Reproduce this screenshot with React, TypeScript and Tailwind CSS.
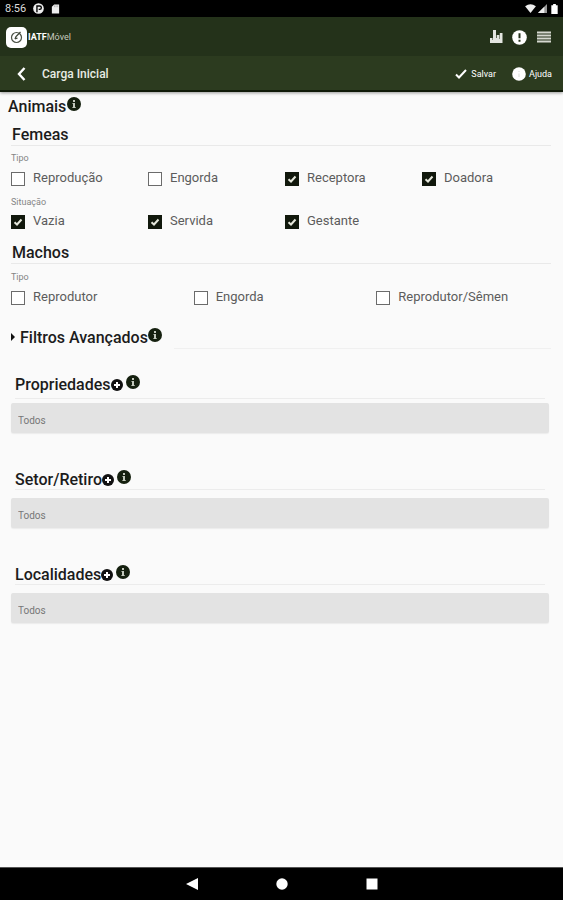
import type { ReactNode } from 'react';

function InfoIcon() {
  return (
    <svg viewBox="0 0 14 14" className="size-[14px] shrink-0" aria-hidden="true">
      <circle cx="7" cy="7" r="7" fill="#15200f" />
      <path d="M6 3h2v2H6zM5.5 6H8v4h.7v1H5.4v-1H6V7h-.5z" fill="#c3c9bd" />
    </svg>
  );
}

function PlusIcon() {
  return (
    <svg viewBox="0 0 12 12" className="size-3 shrink-0" aria-hidden="true">
      <circle cx="6" cy="6" r="6" fill="#111" />
      <path d="M6 3v6M3 6h6" stroke="#fff" strokeWidth="2" />
    </svg>
  );
}

function InfoButton({ label, className = '' }: { label: string; className?: string }) {
  return (
    <button type="button" aria-label={label} className={`mb-1 ${className}`}>
      <InfoIcon />
    </button>
  );
}

function Check({ label, checked = false }: { label: string; checked?: boolean }) {
  return (
    <label className="flex h-5 items-center gap-2 text-[13px] leading-4 text-[#5c5c5c]">
      <span className="relative mt-[2px] size-[14px] shrink-0">
        <input
          type="checkbox"
          defaultChecked={checked}
          className="peer block size-[14px] appearance-none border border-[#6b6b6b] bg-white checked:border-[#11180c] checked:bg-[#11180c]"
        />
        <svg
          viewBox="0 0 14 14"
          className="pointer-events-none absolute inset-0 hidden size-[14px] peer-checked:block"
          aria-hidden="true"
        >
          <path d="M3.5 7.2 6 9.5 10.5 4.5" fill="none" stroke="#e6e8dc" strokeWidth="2" />
        </svg>
      </span>
      <span>{label}</span>
    </label>
  );
}

function Caption({ children }: { children: ReactNode }) {
  return <h4 className="h-3 text-[9px] leading-[14px] text-[#858585]">{children}</h4>;
}

function GroupTitle({ children }: { children: ReactNode }) {
  return (
    <h3 className="mr-2 h-6 border-b border-[#e9e9e9] pl-px text-base leading-[26px] font-medium">
      {children}
    </h3>
  );
}

function Picker({ title, tall = false }: { title: string; tall?: boolean }) {
  return (
    <section className="h-[95px] pr-[10px]">
      <div
        className={`mr-1 ml-1 flex items-start border-b border-[#ececec] ${tall ? 'mb-1 h-[27px]' : 'mb-2 h-[23px]'}`}
      >
        <h3 className="text-base leading-[26px] font-medium">{title}</h3>
        <button type="button" aria-label={`Adicionar ${title}`} className="mt-[7px]">
          <PlusIcon />
        </button>
        <InfoButton label={`Sobre ${title}`} className="mt-[3px] ml-[3px]" />
      </div>
      <input
        type="text"
        aria-label={title}
        placeholder="Todos"
        className="block h-[30px] w-full rounded-xs bg-[#e3e3e3] px-[7px] pt-1 text-[10px] leading-4 shadow-[0_1px_1px_#ececec] outline-none placeholder:text-[#777]"
      />
    </section>
  );
}

function StatusBar() {
  return (
    <div className="flex h-[17px] items-center bg-black px-[5px] text-white">
      <span className="text-[11px] leading-4 text-[#ddd]">8:56</span>
      <svg viewBox="0 0 12 12" className="ml-[7px] size-[11px]" aria-hidden="true">
        <circle cx="6" cy="6" r="5.8" fill="#eee" />
        <path d="M4.3 10V3.3h3a1.8 1.8 0 0 1 0 3.6H6.2" fill="none" stroke="#000" strokeWidth="1.5" />
      </svg>
      <svg viewBox="0 0 9 11" className="ml-[7px] h-[10px] w-[9px]" aria-hidden="true">
        <path d="M3 .5h5.500v10H.5V3z" fill="#eee" />
        <path d="M3.5 1.5v2M5.2 1.5v2M6.9 1.5v2" stroke="#999" strokeWidth=".7" />
      </svg>
      <div className="ml-auto flex items-center gap-[2px]">
        <svg viewBox="0 0 12 10" className="h-[9px] w-[11px]" aria-hidden="true">
          <path d="M0 2.5Q6-2 12 2.5L6 10z" fill="#eee" />
        </svg>
        <svg viewBox="0 0 10 10" className="size-[9px]" aria-hidden="true">
          <path d="M10 0v10H0z" fill="#999" />
          <path d="M7 3v7H0z" fill="#eee" />
        </svg>
        <svg viewBox="0 0 7 11" className="ml-[2px] h-[10px] w-[7px]" aria-hidden="true">
          <path d="M2 0h3v1.500h2V11H0V1.500h2z" fill="#fff" />
        </svg>
      </div>
    </div>
  );
}

function Header() {
  return (
    <header className="z-10 bg-[#2c3b1f] text-white shadow-[0_1px_3px_#0006]">
      <div className="flex h-[39px] items-center bg-[#24321a] pt-px pr-3 pl-[6px]">
        <svg viewBox="0 0 21 21" className="size-[21px]" aria-hidden="true">
          <rect width="21" height="21" rx="5" fill="#fff" />
          <circle cx="10.500" cy="10.500" r="5" fill="none" stroke="#4a5044" strokeWidth="1.200" />
          <path d="M9 12l1-2.500 4.500-4.500M9 12l2.500-1" fill="none" stroke="#3f4638" strokeWidth="1.300" />
        </svg>
        <span className="ml-px text-[9px] leading-3 text-[#c5cabf]">
          <b className="text-white">IATF</b>Móvel
        </span>
        <button type="button" aria-label="Relatórios" className="ml-auto">
          <svg viewBox="0 0 13 14" className="h-[14px] w-[13px]" aria-hidden="true">
            <path d="M0 13V8h2.500v2H3V0h3v8h.7V5h2.600v4h.5V3h2.700v10z" fill="#e3e5e0" />
          </svg>
        </button>
        <button type="button" aria-label="Avisos" className="ml-[9px]">
          <svg viewBox="0 0 15 15" className="size-[15px]" aria-hidden="true">
            <circle cx="7.500" cy="7.500" r="7.300" fill="#fff" />
            <path d="M7.500 3.300v5M7.500 9.700v2" stroke="#24321a" strokeWidth="2" />
          </svg>
        </button>
        <button type="button" aria-label="Menu" className="ml-[10px]">
          <svg viewBox="0 0 14 12" className="h-3 w-[14px]" aria-hidden="true">
            <path d="M0 1.500h14M0 4.500h14M0 7.500h14M0 10.500h14" stroke="#d5d8d0" strokeWidth="2" />
          </svg>
        </button>
      </div>
      <div className="flex h-[36px] items-center border-b-2 border-[#101a09] pt-[2px] pr-[11px] pl-[17px]">
        <button type="button" aria-label="Voltar">
          <svg viewBox="0 0 9 14" className="h-[14px] w-[9px]" aria-hidden="true">
            <path d="M7.500 1 2 7l5.500 6" fill="none" stroke="#fff" strokeWidth="2.400" />
          </svg>
        </button>
        <h1 className="ml-4 text-xs leading-4 font-medium text-[#e8ebe4]">Carga Inicial</h1>
        <button type="button" className="ml-auto flex items-center gap-1 text-[9px] leading-3">
          <svg viewBox="0 0 12 10" className="h-[10px] w-3" aria-hidden="true">
            <path d="m1 5.500 3 3L11 1" fill="none" stroke="#fff" strokeWidth="2" />
          </svg>
          Salvar
        </button>
        <button type="button" className="ml-4 flex items-center gap-[3px] text-[9px] leading-3">
          <svg viewBox="0 0 14 14" className="size-[14px]" aria-hidden="true">
            <circle cx="7" cy="7" r="6.800" fill="#fff" />
            <path d="M7 4v1M7 6.500V10" stroke="#dfe2dc" strokeWidth="1.200" />
          </svg>
          Ajuda
        </button>
      </div>
    </header>
  );
}

export default function App() {
  return (
    <div className="flex min-h-screen flex-col bg-[#fafafa] font-['Roboto',sans-serif] text-[#1c1c1c]">
      <StatusBar />
      <Header />
      <main className="flex-1 pt-[2px] pr-1 pb-6 pl-[11px]">
        <div className="-ml-[3px] flex h-6 items-center gap-px">
          <h2 className="h-6 text-base leading-[26px] font-medium">Animais</h2>
          <InfoButton label="Sobre Animais" />
        </div>

        <section className="mt-1">
          <GroupTitle>Femeas</GroupTitle>
          <div className="mt-[5px]">
            <Caption>Tipo</Caption>
          </div>
          <div className="mt-[5px] grid grid-cols-4">
            <Check label="Reprodução" />
            <Check label="Engorda" />
            <Check label="Receptora" checked />
            <Check label="Doadora" checked />
          </div>
          <div className="mt-[7px]">
            <Caption>Situação</Caption>
          </div>
          <div className="mt-1 grid grid-cols-4">
            <Check label="Vazia" checked />
            <Check label="Servida" checked />
            <Check label="Gestante" checked />
          </div>
        </section>

        <section className="mt-[9px]">
          <GroupTitle>Machos</GroupTitle>
          <div className="mt-[6px]">
            <Caption>Tipo</Caption>
          </div>
          <div className="mt-[5px] grid grid-cols-3">
            <Check label="Reprodutor" />
            <Check label="Engorda" />
            <Check label="Reprodutor/Sêmen" />
          </div>
        </section>

        <div className="mt-[18px] mr-2 flex h-6 items-center">
          <button
            type="button"
            aria-expanded="false"
            className="flex h-6 items-center gap-[5px] text-base leading-6 font-medium"
          >
            <svg viewBox="0 0 4 8" className="h-2 w-1" aria-hidden="true">
              <path d="M0 0l4 4-4 4z" fill="#111" />
            </svg>
            <span className="pt-[2px]">Filtros Avançados</span>
          </button>
          <InfoButton label="Sobre Filtros Avançados" />
          <div className="ml-3 flex-1 self-end border-b border-[#f0f0f0]" />
        </div>

        <div className="mt-[23px]">
          <Picker title="Propriedades" tall />
          <Picker title="Setor/Retiro" />
          <Picker title="Localidades" />
        </div>
      </main>
      <nav className="flex h-[33px] items-center justify-center gap-[78px] border-t border-[#555] bg-black">
        <button type="button" aria-label="Voltar">
          <svg viewBox="0 0 12 12" className="size-3" aria-hidden="true">
            <path d="M12 0v12L0 6z" fill="#fff" />
          </svg>
        </button>
        <button type="button" aria-label="Início">
          <svg viewBox="0 0 12 12" className="size-3" aria-hidden="true">
            <circle cx="6" cy="6" r="5.700" fill="#fff" />
          </svg>
        </button>
        <button type="button" aria-label="Recentes">
          <svg viewBox="0 0 12 12" className="size-3" aria-hidden="true">
            <path d="M.5.5h11v11H.5z" fill="#fff" />
          </svg>
        </button>
      </nav>
    </div>
  );
}
